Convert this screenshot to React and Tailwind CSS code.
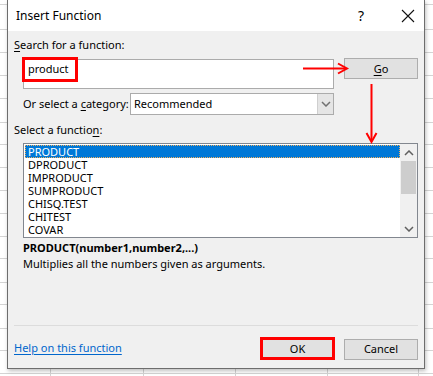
import React from "react"

const font = { fontFamily: '"Noto Sans", "Open Sans", sans-serif' }

const rows = [4, 29, 52, 75, 98, 122, 144, 167, 190, 213, 236, 258, 282, 304, 328, 350, 373]
const cols = [50, 143, 235, 327, 418]

const items = ["PRODUCT", "DPRODUCT", "IMPRODUCT", "SUMPRODUCT", "CHISQ.TEST", "CHITEST", "COVAR"]

function SheetGrid() {
  return (
    <svg className="absolute inset-0" width="433" height="376">
      {rows.map((y) => (
        <line key={"r" + y} x1="0" x2="433" y1={y + 0.5} y2={y + 0.5} stroke="#d4d4d4" />
      ))}
      {cols.map((x) => (
        <line key={"c" + x} x1={x + 0.5} x2={x + 0.5} y1="0" y2="376" stroke="#d4d4d4" />
      ))}
    </svg>
  )
}

function Chevron({ dir = "down", className = "" }) {
  return (
    <svg width="10" height="6" viewBox="0 0 10 6" className={className}>
      <polyline
        points={dir === "down" ? "1,1 5,5 9,1" : "1,5 5,1 9,5"}
        fill="none"
        stroke="currentColor"
        strokeWidth="1.5"
      />
    </svg>
  )
}

export default function App() {
  return (
    <div className="relative w-[433px] h-[376px] bg-white overflow-hidden text-black" style={font}>
      <SheetGrid />

      {/* dialog window */}
      <div className="absolute left-[7px] top-0 w-[418px] h-[369px] border-x border-b border-[#6d6d6d] bg-[#f0f0f0] shadow-[1px_2px_4px_rgba(0,0,0,0.25)] flex flex-col">
        {/* title bar */}
        <div className="h-[31px] bg-white flex items-center shrink-0">
          <span className="ml-[8px] text-[12px] leading-5">Insert Function</span>
          <span className="ml-auto mr-[37px] text-[14px] leading-5">?</span>
          <svg width="14" height="14" viewBox="0 0 14 14" className="mr-[9px]">
            <path d="M1 1 L13 13 M13 1 L1 13" stroke="#111" strokeWidth="1.1" />
          </svg>
        </div>

        <div className="flex flex-col flex-1 px-[6px] text-[11px] whitespace-nowrap">
          <div className="mt-[6px] leading-4">
            <span className="underline underline-offset-2">S</span>earch for a function:
          </div>

          <div className="mt-[5px] flex items-start">
            <div className="ml-[9px] mt-[1px] w-[311px] h-[30px] bg-white border border-[#ababab] pl-[4px] pt-[1px] leading-4">
              product
            </div>
            <button className="ml-[10px] w-[74px] h-[21px] bg-[#e1e1e1] border border-[#adadad] leading-4">
              <span className="underline underline-offset-2">G</span>o
            </button>
          </div>

          <div className="mt-[4px] ml-[9px] flex items-center h-[22px]">
            <span className="w-[107px] leading-4">
              Or select a <span className="underline underline-offset-2">c</span>ategory:
            </span>
            <div className="w-[204px] h-[22px] bg-white border border-[#ababab] flex items-center">
              <span className="pl-[3px] flex-1 leading-4">Recommended</span>
              <div className="w-[16px] h-full bg-[#e5e5e5] border-l border-[#cfcfcf] flex items-center justify-center text-[#707070]">
                <Chevron dir="down" />
              </div>
            </div>
          </div>

          <div className="mt-[7px] leading-4">
            Select a functio<span className="underline underline-offset-2">n</span>:
          </div>

          <div className="mt-[5px] ml-[9px] w-[395px] h-[95px] bg-white border border-[#82878f] flex">
            <div className="flex-1 pt-[1px] pl-[1px]">
              {items.map((item, i) => (
                <div
                  key={item}
                  className={`h-[13px] leading-[13px] pl-[3px] ${
                    i === 0 ? "bg-[#0078d7] text-white outline outline-1 outline-dotted outline-[#f0b060] -outline-offset-1" : ""
                  }`}
                >
                  {item}
                </div>
              ))}
            </div>
            <div className="w-[17px] bg-[#f0f0f0] flex flex-col items-center text-[#606060]">
              <div className="h-[17px] flex items-center justify-center">
                <Chevron dir="up" />
              </div>
              <div className="w-[15px] h-[33px] bg-[#cdcdcd]" />
              <div className="mt-auto h-[17px] flex items-center justify-center">
                <Chevron dir="down" />
              </div>
            </div>
          </div>

          <div className="mt-[2px] ml-[9px] leading-4 font-bold">PRODUCT(number1,number2,...)</div>
          <div className="ml-[9px] leading-4">Multiplies all the numbers given as arguments.</div>

          <div className="mt-[53px] h-px bg-[#dcdcdc]" />

          <div className="mt-[12px] flex items-center">
            <a className="text-[#0066cc] underline underline-offset-2 leading-4 mt-[-2px]">Help on this function</a>
            <button className="ml-auto w-[75px] h-[23px] mt-[-1px] bg-[#e1e1e1] border-[3px] border-[#ff0000] leading-4">
              OK
            </button>
            <button className="ml-[9px] w-[74px] h-[21px] bg-[#e1e1e1] border border-[#adadad] leading-4">
              Cancel
            </button>
          </div>
        </div>
      </div>

      {/* annotations */}
      <div className="absolute left-[22px] top-[57px] w-[56px] h-[25px] border-[3px] border-[#ff0000]" />
      <svg className="absolute inset-0 pointer-events-none" width="433" height="376">
        <line x1="303" y1="68.5" x2="346" y2="68.5" stroke="#ff0000" strokeWidth="2" />
        <polyline points="338,63.5 347,68.5 338,73.5" fill="none" stroke="#ff0000" strokeWidth="2" />
        <line x1="371.5" y1="84" x2="371.5" y2="141" stroke="#ff0000" strokeWidth="2" />
        <polyline points="366.5,133 371.5,142 376.5,133" fill="none" stroke="#ff0000" strokeWidth="2" />
      </svg>
    </div>
  )
}
